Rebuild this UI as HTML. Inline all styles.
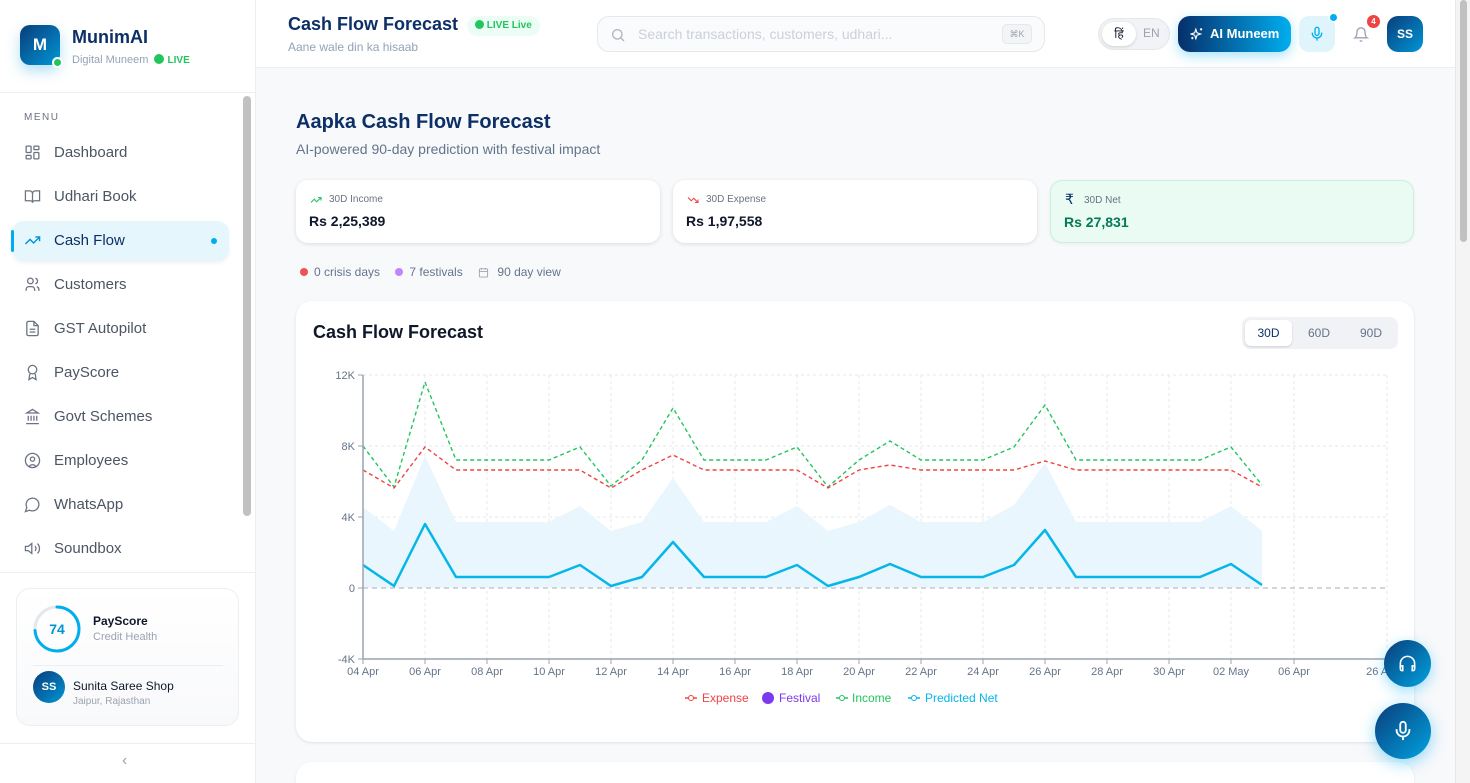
<!DOCTYPE html>
<html style="width:1470px;height:783px;overflow:hidden"><head><meta charset="utf-8"><style>
*{box-sizing:border-box;margin:0;padding:0}
body{width:1470px;height:783px;overflow:hidden;font-family:"Liberation Sans",sans-serif;background:#f8f9fb;position:relative;color:#0f172a}
.sb{position:absolute;left:0;top:0;width:256px;height:783px;background:#fff;border-right:1px solid #eceef2}
.logo{position:absolute;left:20px;top:25px;width:40px;height:40px;border-radius:10px;background:linear-gradient(135deg,#0a3d7a,#0096d6);color:#fff;font-weight:bold;font-size:17px;text-align:center;line-height:40px;box-shadow:0 6px 14px rgba(0,150,214,.3)}
.logo i{position:absolute;right:-3px;bottom:-3px;width:11px;height:11px;border-radius:50%;background:#22c55e;border:2px solid #fff}
.nav{position:absolute;left:12px;width:217px;height:40px;font-size:15px;color:#4b5563;line-height:40px;padding-left:42px}
.nav svg{position:absolute;left:12px;top:11px}
.act{background:#e6f6fd;color:#0c2f66;border-radius:12px;box-shadow:0 2px 4px rgba(0,0,0,.06)}
.hdr{position:absolute;left:256px;top:0;width:1199px;height:68px;background:#fff;border-bottom:1px solid #eceef2}
.card{position:absolute;background:#fff;border-radius:12px;box-shadow:0 1px 4px rgba(0,0,0,.12)}
.lbl{font-size:10px;color:#6b7280;position:absolute;left:33px;top:14px}
.val{font-size:14px;font-weight:bold;position:absolute;left:13px;top:33px}
.ax{font-size:11px;fill:#64748b;font-family:"Liberation Sans",sans-serif}
</style></head><body>
<div class="sb">
 <div class="logo">M<i></i></div>
 <div style="position:absolute;left:72px;top:27px;font-size:18px;font-weight:bold;color:#0c2f66">MunimAI</div>
 <div style="position:absolute;left:72px;top:54px;font-size:11px;color:#94a3b8">Digital Muneem <span style="display:inline-block;width:10px;height:10px;border-radius:50%;background:#22c55e;vertical-align:-1px;margin-left:3px"></span> <b style="color:#22c55e;font-size:10px">LIVE</b></div>
 <div style="position:absolute;left:0;top:92px;width:256px;border-top:1px solid #eceef2"></div>
 <div style="position:absolute;left:24px;top:112px;font-size:10px;letter-spacing:1.5px;color:#6b7280">MENU</div>
 <div class="nav" style="top:133px"><svg width="17" height="17" viewBox="0 0 24 24" fill="none" stroke="#6b7280" stroke-width="1.8"><rect x="3" y="3" width="7" height="9" rx="1"/><rect x="14" y="3" width="7" height="5" rx="1"/><rect x="14" y="12" width="7" height="9" rx="1"/><rect x="3" y="16" width="7" height="5" rx="1"/></svg>Dashboard</div>
 <div class="nav" style="top:177px"><svg width="17" height="17" viewBox="0 0 24 24" fill="none" stroke="#6b7280" stroke-width="1.8"><path d="M2 4h6a4 4 0 014 4v13a3 3 0 00-3-3H2zM22 4h-6a4 4 0 00-4 4v13a3 3 0 013-3h7z"/></svg>Udhari Book</div>
 <div class="nav act" style="top:221px"><span style="position:absolute;left:-1px;top:9px;width:3px;height:22px;background:#00aeef;border-radius:2px"></span><svg width="17" height="17" viewBox="0 0 24 24" fill="none" stroke="#0096d6" stroke-width="2"><path d="M22 7l-8.5 8.5-5-5L2 17M16 7h6v6"/></svg>Cash Flow<span style="position:absolute;right:12px;top:17px;width:6px;height:6px;border-radius:50%;background:#00aeef"></span></div>
 <div class="nav" style="top:265px"><svg width="17" height="17" viewBox="0 0 24 24" fill="none" stroke="#6b7280" stroke-width="1.8"><circle cx="9" cy="7" r="4"/><path d="M3 21v-2a4 4 0 014-4h4a4 4 0 014 4v2M16 3.1a4 4 0 010 7.8M21 21v-2a4 4 0 00-3-3.9"/></svg>Customers</div>
 <div class="nav" style="top:309px"><svg width="17" height="17" viewBox="0 0 24 24" fill="none" stroke="#6b7280" stroke-width="1.8"><path d="M14 2H6a2 2 0 00-2 2v16a2 2 0 002 2h12a2 2 0 002-2V8zM14 2v6h6M8 13h8M8 17h8"/></svg>GST Autopilot</div>
 <div class="nav" style="top:353px"><svg width="17" height="17" viewBox="0 0 24 24" fill="none" stroke="#6b7280" stroke-width="1.8"><circle cx="12" cy="8" r="6"/><path d="M8.2 13.9L7 22l5-3 5 3-1.2-8.1"/></svg>PayScore</div>
 <div class="nav" style="top:397px"><svg width="17" height="17" viewBox="0 0 24 24" fill="none" stroke="#6b7280" stroke-width="1.8"><path d="M3 22h18M6 18v-7M10 18v-7M14 18v-7M18 18v-7M12 2l8 5H4z"/></svg>Govt Schemes</div>
 <div class="nav" style="top:441px"><svg width="17" height="17" viewBox="0 0 24 24" fill="none" stroke="#6b7280" stroke-width="1.8"><circle cx="12" cy="12" r="10"/><circle cx="12" cy="10" r="3"/><path d="M7 20.7a6 6 0 0110 0"/></svg>Employees</div>
 <div class="nav" style="top:485px"><svg width="17" height="17" viewBox="0 0 24 24" fill="none" stroke="#6b7280" stroke-width="1.8"><path d="M7.9 20A9 9 0 104 16.1L2 22z"/></svg>WhatsApp</div>
 <div class="nav" style="top:529px"><svg width="17" height="17" viewBox="0 0 24 24" fill="none" stroke="#6b7280" stroke-width="1.8"><path d="M11 5L6 9H2v6h4l5 4zM15.5 8.5a5 5 0 010 7M19 5a10 10 0 010 14"/></svg>Soundbox</div>
 <div style="position:absolute;left:243px;top:96px;width:8px;height:420px;background:#c1c1c1;border-radius:4px"></div>
 <div style="position:absolute;left:0;top:572px;width:256px;border-top:1px solid #eceef2"></div>
 <div style="position:absolute;left:16px;top:588px;width:223px;height:138px;border:1px solid #eceef2;border-radius:14px;background:linear-gradient(#fff,#f8f9fb)">
  <svg style="position:absolute;left:16px;top:16px" width="48" height="48" viewBox="0 0 48 48"><circle cx="24" cy="24" r="22" fill="none" stroke="#e5e7eb" stroke-width="3"/><circle cx="24" cy="24" r="22" fill="none" stroke="#00aeef" stroke-width="3" stroke-dasharray="102 200" transform="rotate(-90 24 24)" stroke-linecap="round"/><text x="24" y="29" text-anchor="middle" font-size="14" font-weight="bold" fill="#0096d6" font-family="Liberation Sans">74</text></svg>
  <div style="position:absolute;left:76px;top:25px;font-size:12px;font-weight:bold">PayScore</div>
  <div style="position:absolute;left:76px;top:42px;font-size:11px;color:#9ca3af">Credit Health</div>
  <div style="position:absolute;left:16px;top:76px;width:190px;border-top:1px solid #eceef2"></div>
  <div style="position:absolute;left:16px;top:82px;width:32px;height:32px;border-radius:50%;background:linear-gradient(135deg,#0a3d7a,#0096d6);color:#fff;font-size:11px;font-weight:bold;text-align:center;line-height:32px">SS</div>
  <div style="position:absolute;left:56px;top:90px;font-size:12px">Sunita Saree Shop</div>
  <div style="position:absolute;left:56px;top:107px;font-size:10px;color:#9ca3af">Jaipur, Rajasthan</div>
 </div>
 <div style="position:absolute;left:0;top:743px;width:256px;border-top:1px solid #eceef2"></div>
 <div style="position:absolute;left:122px;top:752px;font-size:16px;color:#9ca3af">‹</div>
</div>

<div class="hdr">
 <div style="position:absolute;left:32px;top:14px;font-size:18px;font-weight:bold;color:#0c2f66">Cash Flow Forecast</div>
 <div style="position:absolute;left:211px;top:16px;height:20px;padding:0 8px;border-radius:10px;background:#ecfdf5;font-size:10px;font-weight:bold;color:#22c55e;line-height:20px"><span style="display:inline-block;width:9px;height:9px;border-radius:50%;background:#22c55e;vertical-align:-1px"></span> LIVE Live</div>
 <div style="position:absolute;left:32px;top:40px;font-size:12px;color:#94a3b8">Aane wale din ka hisaab</div>
 <div style="position:absolute;left:341px;top:16px;width:448px;height:36px;border:1px solid #e5e7eb;border-radius:12px;background:#fafbfc">
  <svg style="position:absolute;left:12px;top:10px" width="16" height="16" viewBox="0 0 24 24" fill="none" stroke="#b0b6c0" stroke-width="2"><circle cx="11" cy="11" r="7"/><path d="M21 21l-5-5"/></svg>
  <div style="position:absolute;left:40px;top:9px;font-size:14px;color:#cbd0d8">Search transactions, customers, udhari...</div>
  <div style="position:absolute;right:12px;top:7px;width:30px;height:20px;border:1px solid #e5e7eb;border-radius:5px;background:#f3f4f6;font-size:9px;color:#9ca3af;text-align:center;line-height:18px">⌘K</div>
 </div>
 <div style="position:absolute;left:842px;top:18px;width:72px;height:32px;border-radius:16px;background:#f1f3f6;border:1px solid #e5e7eb">
  <div style="position:absolute;left:3px;top:3px;width:34px;height:24px;border-radius:12px;background:#fff;box-shadow:0 1px 3px rgba(0,0,0,.15);text-align:center;font-size:12px;line-height:24px;font-family:'Liberation Sans','Noto Sans CJK SC',sans-serif">हिं</div>
  <div style="position:absolute;left:44px;top:7px;font-size:12px;color:#9ca3af">EN</div>
 </div>
 <div style="position:absolute;left:922px;top:16px;width:113px;height:36px;border-radius:12px;background:linear-gradient(90deg,#062f6b,#00aeef);box-shadow:0 4px 12px rgba(0,174,239,.35);color:#fff;font-size:13px;font-weight:bold;line-height:36px;padding-left:32px">
  <svg style="position:absolute;left:12px;top:11px" width="14" height="14" viewBox="0 0 24 24" fill="none" stroke="#fff" stroke-width="2"><path d="M10 4l2 6 6 2-6 2-2 6-2-6-6-2 6-2zM19 2v4M17 4h4M4 17v4M2 19h4"/></svg>AI Muneem</div>
 <div style="position:absolute;left:1043px;top:16px;width:36px;height:36px;border-radius:10px;background:#e0f4fc">
  <svg style="position:absolute;left:10px;top:9px" width="16" height="18" viewBox="0 0 24 24" fill="none" stroke="#00aeef" stroke-width="2"><rect x="9" y="2" width="6" height="12" rx="3"/><path d="M5 10v1a7 7 0 0014 0v-1M12 18v4"/></svg>
  <span style="position:absolute;right:-3px;top:-3px;width:9px;height:9px;border-radius:50%;background:#00aeef;border:1.5px solid #fff"></span></div>
 <svg style="position:absolute;left:1097px;top:26px" width="16" height="17" viewBox="0 0 24 24" fill="none" stroke="#9ca3af" stroke-width="2"><path d="M18 8a6 6 0 00-12 0c0 7-3 9-3 9h18s-3-2-3-9M13.7 21a2 2 0 01-3.4 0"/></svg>
 <div style="position:absolute;left:1111px;top:15px;width:13px;height:13px;border-radius:50%;background:#ef4444;color:#fff;font-size:8px;font-weight:bold;text-align:center;line-height:13px">4</div>
 <div style="position:absolute;left:1131px;top:16px;width:36px;height:36px;border-radius:11px;background:linear-gradient(135deg,#0a3d7a,#0096d6);color:#fff;font-size:12px;font-weight:bold;text-align:center;line-height:36px">SS</div>
</div>
<div style="position:absolute;left:1455px;top:0;width:15px;height:783px;background:#f4f4f4;border-left:1px solid #e8e8e8"><div style="position:absolute;left:4px;top:0;width:7px;height:242px;background:#c1c1c1;border-radius:4px"></div></div>

<div style="position:absolute;left:296px;top:111px;font-size:20px;font-weight:bold;color:#0c2f66">Aapka Cash Flow Forecast</div>
<div style="position:absolute;left:296px;top:141px;font-size:14px;color:#64748b">AI-powered 90-day prediction with festival impact</div>

<div class="card" style="left:296px;top:180px;width:364px;height:63px"><svg style="position:absolute;left:13px;top:14px" width="14" height="12" viewBox="0 0 24 24" fill="none" stroke="#22c55e" stroke-width="2.2"><path d="M22 7l-8.5 8.5-5-5L2 17M16 7h6v6"/></svg><div class="lbl">30D Income</div><div class="val">Rs 2,25,389</div></div>
<div class="card" style="left:673px;top:180px;width:364px;height:63px"><svg style="position:absolute;left:13px;top:14px" width="14" height="12" viewBox="0 0 24 24" fill="none" stroke="#ef4444" stroke-width="2.2"><path d="M22 17l-8.5-8.5-5 5L2 7M16 17h6v-6"/></svg><div class="lbl">30D Expense</div><div class="val">Rs 1,97,558</div></div>
<div class="card" style="left:1050px;top:180px;width:364px;height:63px;background:#e9fbf2;border:1px solid #c9f1dc;box-shadow:0 1px 3px rgba(0,0,0,.06)"><div style="position:absolute;left:14px;top:10px;font-size:14px;color:#0c2f66">₹</div><div class="lbl">30D Net</div><div class="val" style="color:#047857">Rs 27,831</div></div>

<div style="position:absolute;left:300px;top:265px;font-size:12px;color:#64748b"><span style="display:inline-block;width:8px;height:8px;border-radius:50%;background:#f05252;margin-right:6px"></span>0 crisis days <span style="display:inline-block;width:8px;height:8px;border-radius:50%;background:#c084fc;margin:0 6px 0 12px"></span>7 festivals <svg style="margin:0 5px -2px 12px" width="11" height="11" viewBox="0 0 24 24" fill="none" stroke="#9ca3af" stroke-width="2"><rect x="3" y="4" width="18" height="18" rx="2"/><path d="M16 2v4M8 2v4M3 10h18"/></svg> 90 day view</div>

<div class="card" style="left:296px;top:301px;width:1118px;height:441px;border-radius:16px;box-shadow:0 1px 3px rgba(0,0,0,.1)">
 <div style="position:absolute;left:17px;top:21px;font-size:18px;font-weight:bold">Cash Flow Forecast</div>
 <div style="position:absolute;left:946px;top:16px;width:156px;height:32px;border-radius:8px;background:#f1f2f5;font-size:12px;color:#64748b">
  <div style="position:absolute;left:3px;top:3px;width:47px;height:26px;border-radius:6px;background:#fff;box-shadow:0 1px 2px rgba(0,0,0,.15);color:#0c2f66;text-align:center;line-height:26px">30D</div>
  <div style="position:absolute;left:66px;top:9px">60D</div><div style="position:absolute;left:118px;top:9px">90D</div>
 </div>
</div>
<svg style="position:absolute;left:0;top:0" width="1470" height="783">
 <g stroke="#e5e7eb" stroke-dasharray="3 3" stroke-width="1">
  <path d="M363 375H1387M363 446H1387M363 517H1387"/>
  <path d="M425 375V659M487 375V659M549 375V659M611 375V659M673 375V659M735 375V659M797 375V659M859 375V659M921 375V659M983 375V659M1045 375V659M1107 375V659M1169 375V659M1231 375V659M1294 375V659M1387 375V659"/>
 </g>
 <polygon fill="#e9f6fd" points="363,588 363,507 394,531 425,456 456,522 487,522 518,522 549,522 580,506 611,531 642,522 673,478 704,522 735,522 766,522 797,506 828,531 859,522 890,505 921,522 952,522 983,522 1014,505 1045,463 1076,522 1107,522 1138,522 1169,522 1200,522 1231,506 1262,531 1262,588"/>
 <path d="M363 588H1387" stroke="#c4c8d0" stroke-width="1.5" stroke-dasharray="5 4"/>
 <polyline fill="none" stroke="#22c55e" stroke-width="1.4" stroke-dasharray="4 3" points="363,446 394,487 425,382 456,460 487,460 518,460 549,460 580,447 611,486 642,460 673,408 704,460 735,460 766,460 797,447 828,487 859,460 890,441 921,460 952,460 983,460 1014,447 1045,405 1076,460 1107,460 1138,460 1169,460 1200,460 1231,447 1262,485"/>
 <polyline fill="none" stroke="#ef4444" stroke-width="1.4" stroke-dasharray="4 3" points="363,470 394,488 425,447 456,470 487,470 518,470 549,470 580,470 611,488 642,470 673,455 704,470 735,470 766,470 797,470 828,488 859,470 890,465 921,470 952,470 983,470 1014,470 1045,461 1076,470 1107,470 1138,470 1169,470 1200,470 1231,470 1262,487"/>
 <polyline fill="none" stroke="#06b6e8" stroke-width="2.5" stroke-linejoin="round" points="363,565 394,586 425,524 456,577 487,577 518,577 549,577 580,565 611,586 642,577 673,542 704,577 735,577 766,577 797,565 828,586 859,577 890,564 921,577 952,577 983,577 1014,565 1045,530 1076,577 1107,577 1138,577 1169,577 1200,577 1231,564 1262,585"/>
 <path d="M363 375V659H1387" fill="none" stroke="#9ca3af" stroke-width="1.5"/>
 <path d="M358 375h5M358 446h5M358 517h5M358 588h5M358 659h5M425 659v5M487 659v5M549 659v5M611 659v5M673 659v5M735 659v5M797 659v5M859 659v5M921 659v5M983 659v5M1045 659v5M1107 659v5M1169 659v5M1231 659v5M1294 659v5M1387 659v5M363 659v5" stroke="#9ca3af"/>
 <g class="ax" text-anchor="end"><text x="355" y="379">12K</text><text x="355" y="450">8K</text><text x="355" y="521">4K</text><text x="355" y="592">0</text><text x="355" y="663">-4K</text></g>
 <g class="ax" text-anchor="middle"><text x="363" y="675">04 Apr</text><text x="425" y="675">06 Apr</text><text x="487" y="675">08 Apr</text><text x="549" y="675">10 Apr</text><text x="611" y="675">12 Apr</text><text x="673" y="675">14 Apr</text><text x="735" y="675">16 Apr</text><text x="797" y="675">18 Apr</text><text x="859" y="675">20 Apr</text><text x="921" y="675">22 Apr</text><text x="983" y="675">24 Apr</text><text x="1045" y="675">26 Apr</text><text x="1107" y="675">28 Apr</text><text x="1169" y="675">30 Apr</text><text x="1231" y="675">02 May</text><text x="1294" y="675">06 Apr</text><text x="1382" y="675">26 Apr</text></g>
 <g font-family="Liberation Sans" font-size="12">
  <path d="M685 698h12" stroke="#ef4444" stroke-width="1.5"/><circle cx="691" cy="698" r="2.5" fill="#fff" stroke="#ef4444"/><text x="702" y="702" fill="#ef4444">Expense</text>
  <circle cx="768" cy="698" r="6" fill="#7c3aed"/><text x="779" y="702" fill="#7c3aed">Festival</text>
  <path d="M836 698h12" stroke="#22c55e" stroke-width="1.5"/><circle cx="842" cy="698" r="2.5" fill="#fff" stroke="#22c55e"/><text x="852" y="702" fill="#22c55e">Income</text>
  <path d="M908 698h12" stroke="#06b6e8" stroke-width="1.5"/><circle cx="914" cy="698" r="2.5" fill="#fff" stroke="#06b6e8"/><text x="925" y="702" fill="#06b6e8">Predicted Net</text>
 </g>
</svg>
<div class="card" style="left:296px;top:762px;width:1118px;height:21px;border-radius:16px 16px 0 0;box-shadow:0 1px 3px rgba(0,0,0,.08)"></div>
<div style="position:absolute;left:1384px;top:640px;width:47px;height:47px;border-radius:50%;background:linear-gradient(135deg,#0a3d7a,#00a3e0);box-shadow:0 4px 14px rgba(0,174,239,.4)"><svg style="position:absolute;left:14px;top:14px" width="19" height="19" viewBox="0 0 24 24" fill="none" stroke="#fff" stroke-width="2"><path d="M3 18v-6a9 9 0 0118 0v6"/><path d="M21 19a2 2 0 01-2 2h-1v-6h3zM3 19a2 2 0 002 2h1v-6H3z"/></svg></div>
<div style="position:absolute;left:1375px;top:703px;width:56px;height:56px;border-radius:50%;background:linear-gradient(135deg,#0a3d7a,#00a3e0);box-shadow:0 4px 16px rgba(0,174,239,.45)"><svg style="position:absolute;left:17px;top:16px" width="22" height="24" viewBox="0 0 24 24" fill="none" stroke="#fff" stroke-width="2"><rect x="9" y="2" width="6" height="12" rx="3"/><path d="M5 10v1a7 7 0 0014 0v-1M12 18v4"/></svg></div>
</body></html>
